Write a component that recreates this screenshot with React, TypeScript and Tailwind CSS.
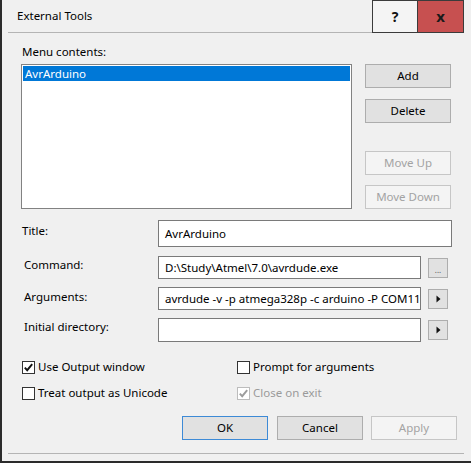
import React from "react";

const BTN = "w-[86px] h-[24px] flex items-center justify-center border";
const NORMAL = "bg-[#e1e1e1] border-[#adadad] text-black";
const DISABLED = "bg-[#f4f4f4] border-[#c6c6c6] text-[#a3a3a3]";

function Arrow() {
  return (
    <svg width="5" height="8" viewBox="0 0 5 8">
      <polygon points="0.5,0.5 4.5,4 0.5,7.5" fill="#111" />
    </svg>
  );
}

function SmallBtn({ children }: { children: React.ReactNode }) {
  return (
    <div className="ml-[7px] w-[20px] h-[20px] bg-[#e1e1e1] border border-[#adadad] flex items-center justify-center">
      {children}
    </div>
  );
}

function Check({ checked, disabled }: { checked?: boolean; disabled?: boolean }) {
  return (
    <div
      className={`w-[13px] h-[13px] bg-white border flex items-center justify-center shrink-0 ${
        disabled ? "border-[#bcbcbc]" : "border-[#333]"
      }`}
    >
      {checked && (
        <svg width="11" height="11" viewBox="0 0 11 11" fill="none">
          <path
            d="M1.8 5.6l2.4 2.6 5-6"
            stroke={disabled ? "#9c9c9c" : "#111"}
            strokeWidth="1.9"
          />
        </svg>
      )}
    </div>
  );
}

function Field({
  label,
  pt,
  h,
  w,
  value,
  btn,
}: {
  label: string;
  pt: string;
  h: string;
  w: string;
  value?: string;
  btn?: React.ReactNode;
}) {
  return (
    <div className={`flex ml-[20px] ${h}`}>
      <div className={`w-[136px] leading-[16px] ${pt}`}>{label}</div>
      <div className="flex items-center h-full">
        <div
          className={`${w} h-full bg-white border border-[#7a7a7a] flex items-center pl-[6px] whitespace-nowrap overflow-hidden`}
        >
          {value}
        </div>
        {btn}
      </div>
    </div>
  );
}

export default function App() {
  return (
    <div className="w-[471px] h-[463px] bg-[#f0f0f0] border-l-2 border-b-2 border-[#2b2b2b] flex flex-col overflow-hidden text-[11.5px] leading-[16px] text-black font-['Noto_Sans','Open_Sans',sans-serif]">
      {/* title bar */}
      <div className="flex h-[33px] shrink-0">
        <div className="flex-1 flex flex-col">
          <div className="h-[32px] flex items-center pl-[15px]">External Tools</div>
          <div className="h-px ml-[6px] bg-[#b4b4b4]" />
        </div>
        <div className="w-[46px] h-[33px] border border-[#3b3b3b] bg-[#f4f4f4] flex items-center justify-center font-bold text-[14px] text-[#111]">
          ?
        </div>
        <div className="w-[46px] h-[33px] border border-l-0 border-[#3b3b3b] bg-[#c75050] flex items-center justify-center font-bold text-[15px] text-[#1a1a1a] pb-[2px]">
          x
        </div>
        <div className="w-[7px]" />
      </div>

      <div className="mt-[11px] ml-[20px]">Menu contents:</div>

      <div className="mt-[4px] ml-[19px] flex">
        <div className="w-[331px] h-[145px] bg-white border border-[#828282] p-px">
          <div className="h-[15px] bg-[#0078d7] text-white leading-[15px] pl-[2px]">AvrArduino</div>
        </div>
        <div className="ml-[13px] flex flex-col">
          <div className={`${BTN} ${NORMAL}`}>Add</div>
          <div className={`${BTN} ${NORMAL} mt-[11px]`}>Delete</div>
          <div className={`${BTN} ${DISABLED} mt-[28px]`}>Move Up</div>
          <div className={`${BTN} ${DISABLED} mt-[10px]`}>Move Down</div>
        </div>
      </div>

      <div className="mt-[11px]">
        <Field label="Title:" pt="pt-[3px]" h="h-[27px]" w="w-[294px]" value="AvrArduino" />
      </div>
      <div className="mt-[9px]">
        <Field
          label="Command:"
          pt="pt-[1px] pl-[2px]"
          h="h-[23px]"
          w="w-[263px]"
          value="D:\Study\Atmel\7.0\avrdude.exe"
          btn={
            <SmallBtn>
              <span className="text-[8px] text-[#555] leading-none pt-[5px]">...</span>
            </SmallBtn>
          }
        />
      </div>
      <div className="mt-[8px]">
        <Field
          label="Arguments:"
          pt="pt-[2px] pl-[2px]"
          h="h-[23px]"
          w="w-[263px]"
          value="avrdude -v -p atmega328p -c arduino -P COM11"
          btn={
            <SmallBtn>
              <Arrow />
            </SmallBtn>
          }
        />
      </div>
      <div className="mt-[8px]">
        <Field
          label="Initial directory:"
          pt="pt-[1px] pl-[2px]"
          h="h-[24px]"
          w="w-[263px]"
          btn={
            <SmallBtn>
              <Arrow />
            </SmallBtn>
          }
        />
      </div>

      <div className="mt-[17px] ml-[20px] flex h-[16px] items-center">
        <div className="w-[215px] flex items-center gap-[3px]">
          <Check checked />
          <span>Use Output window</span>
        </div>
        <div className="flex items-center gap-[3px]">
          <Check />
          <span>Prompt for arguments</span>
        </div>
      </div>
      <div className="mt-[10px] ml-[20px] flex h-[16px] items-center">
        <div className="w-[215px] flex items-center gap-[3px]">
          <Check />
          <span>Treat output as Unicode</span>
        </div>
        <div className="flex items-center gap-[3px]">
          <Check checked disabled />
          <span className="text-[#9a9a9a]">Close on exit</span>
        </div>
      </div>

      <div className="mt-[15px] flex justify-end pr-[14px]">
        <div className={`${BTN} bg-[#e1e1e1] border-[#3d8ad6]`}>OK</div>
        <div className={`${BTN} ${NORMAL} ml-[9px]`}>Cancel</div>
        <div className={`${BTN} ${DISABLED} ml-[8px]`}>Apply</div>
      </div>

      <div className="mt-[13px] ml-[6px] mr-[7px] h-px bg-[#b4b4b4]" />
    </div>
  );
}
